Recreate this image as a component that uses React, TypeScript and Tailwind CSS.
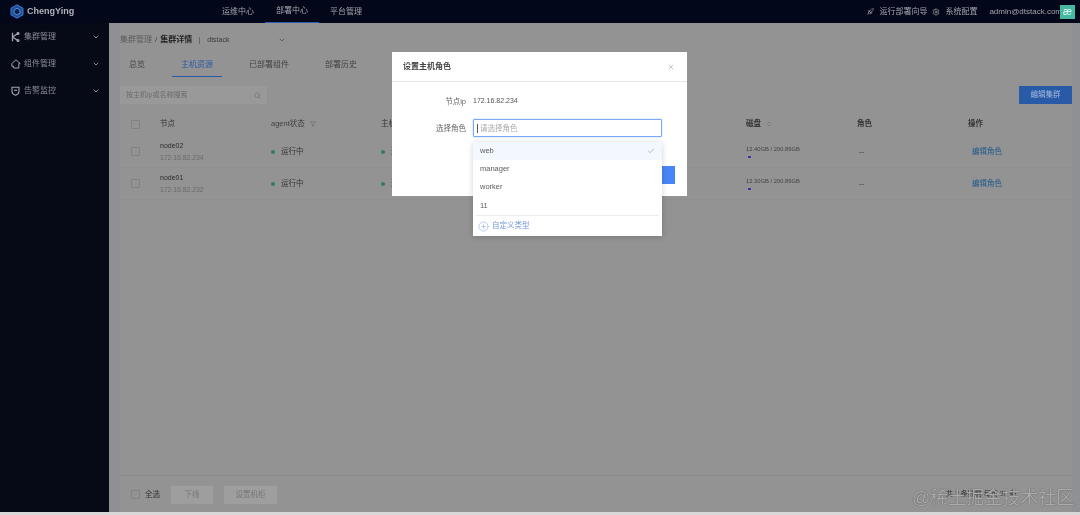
import { Check, ChevronDown, ChevronsUpDown, CirclePlus, Filter, Rocket, Search, Settings, X } from "lucide-react";

function Logo() {
  return (
    <svg width="14" height="15" viewBox="0 0 14 15" fill="none">
      <path d="M7 .8 13 4.2v6.6L7 14.2 1 10.8V4.2Z" fill="#1d4f9c" stroke="#3f7fd0" strokeWidth="1" />
      <path d="M7 4.2 10 6v3.2l-3 1.7-3-1.7V6Z" fill="#0b2350" stroke="#6aa5e6" strokeWidth=".8" />
    </svg>
  );
}

function ClusterIcon() {
  return (
    <svg width="9" height="10" viewBox="0 0 9 10" fill="none" stroke="#a4a7ae" strokeWidth="1.3">
      <path d="M1.5 .8v8.4M1.5 5 6.5 1.8M1.5 5l5 3.2" />
      <circle cx="7" cy="1.5" r=".9" />
      <circle cx="7" cy="8.5" r=".9" />
    </svg>
  );
}

function ComponentIcon() {
  return (
    <svg width="10" height="10" viewBox="0 0 10 10" fill="none" stroke="#a4a7ae" strokeWidth="1">
      <path d="M5 .8 9.2 4.6 7.8 4.6V9H2.6V7.2H.8V4.6Z" />
    </svg>
  );
}

function ShieldIcon() {
  return (
    <svg width="9" height="10" viewBox="0 0 9 10" fill="none" stroke="#a4a7ae" strokeWidth="1.1">
      <path d="M1 1.2h7v4.2Q8 8 4.5 9.2 1 8 1 5.4Z" />
      <path d="M3 4.2h3" />
    </svg>
  );
}

function NavRow({ icon, label }: { icon: React.ReactNode; label: string }) {
  return (
    <div className="flex h-[27px] items-center pl-[11px] pr-[9px] text-[8px] text-[#8b8e96]">
      <span className="flex w-[13px] items-center">{icon}</span>
      <span className="flex-1">{label}</span>
      <ChevronDown size={8} strokeWidth={3} className="text-[#8b8e96]" />
    </div>
  );
}

const cols = "grid grid-cols-[40px_111px_110px_365px_111px_111px_1fr] items-center";

function Box() {
  return <span className="block h-[9px] w-[9px] rounded-[1px] border border-[#828282]" />;
}

function Row({ name, ip, disk }: { name: string; ip: string; disk: string }) {
  return (
    <div className={`${cols} h-[32px] border-b border-[#909090] text-[7.5px]`}>
      <span className="pl-[11px]"><Box /></span>
      <div className="flex flex-col gap-[2px] leading-[10px]">
        <span className="text-[7px] text-[#2c2c2c]">{name}</span>
        <span className="text-[6.8px] text-[#6a6a6a]">{ip}</span>
      </div>
      <div className="flex items-center gap-[6px] text-[#333]">
        <span className="h-[4px] w-[4px] rounded-full bg-[#2a8060]" />
        运行中
      </div>
      <div className="flex items-center gap-[6px] text-[#333]">
        <span className="h-[4px] w-[4px] rounded-full bg-[#2a8060]" />
        运行中
      </div>
      <div className="flex flex-col gap-[2px] leading-[9px]">
        <span className="text-[5.8px] text-[#444]">{disk}</span>
        <span className="ml-[2px] h-[2px] w-[3px] bg-[#3b35a8]" />
      </div>
      <span className="pl-[2px] text-[#333]">--</span>
      <span className="pl-[4px] text-[#22598f]">编辑角色</span>
    </div>
  );
}

export default function App() {
  return (
    <div className="relative flex h-[515px] w-[1080px] flex-col overflow-hidden bg-[#d8d8d8] font-['Liberation_Sans','Noto_Sans_CJK_SC',sans-serif] blur-[0.5px]">
      <header className="flex h-[23px] shrink-0 items-center bg-[#03071a] text-[8px] text-[#a2a4ab]">
        <div className="flex w-[211px] items-center pl-[10px]">
          <Logo />
          <span className="ml-[3px] text-[9px] font-bold text-[#b0b3ba]">ChengYing</span>
        </div>
        <nav className="flex h-full items-center">
          <span className="w-[54px] text-center">运维中心</span>
          <span className="flex h-full w-[54px] items-center justify-center border-b border-[#2a5cb0]">部署中心</span>
          <span className="w-[54px] text-center">平台管理</span>
        </nav>
        <div className="ml-auto flex items-center pr-[18px]">
          <Rocket size={7} className="mr-[5px]" />
          <span>运行部署向导</span>
          <Settings size={8} className="ml-[5px] mr-[5px]" />
          <span>系统配置</span>
          <span className="ml-[12px]">admin@dtstack.com</span>
        </div>
      </header>

      <div className="mb-[3px] flex min-h-0 flex-1">
        <aside className="w-[109px] shrink-0 bg-[#060916]">
          <NavRow icon={<ClusterIcon />} label="集群管理" />
          <NavRow icon={<ComponentIcon />} label="组件管理" />
          <NavRow icon={<ShieldIcon />} label="告警监控" />
        </aside>

        <main className="flex min-w-0 flex-1 bg-[#8e9094] pl-[11px] pr-[8px]">
          <div className="flex min-w-0 flex-1 flex-col bg-[#939393]">
            <div className="flex h-[34px] shrink-0 items-center text-[8px]">
              <span className="text-[#5c5c5c]">集群管理</span>
              <span className="mx-[3px] text-[#444]">/</span>
              <span className="font-bold text-[#222]">集群详情</span>
              <span className="mx-[7px] h-[7px] w-px bg-[#666]" />
              <span className="text-[7px] text-[#3a3a3a]">dtstack</span>
              <ChevronDown size={8} className="ml-[49px] text-[#444]" />
            </div>

            <div className="flex h-[20px] shrink-0 items-start text-[8px] text-[#444]">
              <span className="w-[52px] pl-[9px] pt-[2px]">总览</span>
              <span className="h-[20px] w-[50px] border-b border-[#2a5aa8] pt-[2px] text-center text-[#2a5aa8]">主机资源</span>
              <span className="ml-[27px] pt-[2px]">已部署组件</span>
              <span className="ml-[36px] pt-[2px]">部署历史</span>
            </div>

            <div className="mt-[9px] flex h-[18px] shrink-0 justify-between">
              <div className="flex w-[147px] items-center justify-between bg-[#999999] px-[6px] text-[7px] text-[#6c6c6c]">
                按主机ip或名称搜索
                <Search size={7} />
              </div>
              <button className="h-[18px] w-[53px] bg-[#285aa8] text-[7.5px] text-[#a3b8dc]">编辑集群</button>
            </div>

            <div className={`${cols} mt-[8px] h-[24px] shrink-0 text-[7.5px] text-[#333]`}>
              <span className="pl-[11px]"><Box /></span>
              <span>节点</span>
              <span className="flex items-center gap-[5px] text-[#3f3f3f]">agent状态 <Filter size={6} className="text-[#666]" /></span>
              <span>主机状态</span>
              <span className="flex items-center gap-[5px] font-bold">磁盘 <ChevronsUpDown size={6} className="text-[#666]" /></span>
              <span className="font-bold">角色</span>
              <span className="font-bold">操作</span>
            </div>
            <Row name="node02" ip="172.16.82.234" disk="12.40GB / 200.89GB" />
            <Row name="node01" ip="172.16.82.232" disk="12.30GB / 200.89GB" />

            <div className="mt-auto flex h-[37px] shrink-0 items-center border-t border-[#888888] pl-[11px] pt-[1px] text-[7.5px] text-[#333]">
              <Box />
              <span className="ml-[5px]">全选</span>
              <button className="ml-[11px] h-[18px] w-[42px] bg-[#9e9e9e] text-[#777]">下线</button>
              <button className="ml-[11px] h-[18px] w-[53px] bg-[#9e9e9e] text-[#777]">设置机柜</button>
              <span className="ml-[669px] text-[7px] text-[#333]">共 2 条数据 每页 20 条</span>
            </div>
          </div>
        </main>
      </div>

      <div className="absolute left-[1060px] top-[5px] flex h-[14px] w-[15px] items-center justify-center bg-[#47b8a0] text-[10px] leading-none text-[#e8fff8]">æ</div>

      <section className="absolute left-[392px] top-[52px] h-[144px] w-[295px] bg-white">
        <div className="flex h-[30px] items-center justify-between border-b border-[#e5e5e5] pl-[11px] pr-[12px] text-[8px] font-bold text-[#444]">
          设置主机角色
          <X size={8} className="text-[#aaa]" />
        </div>
        <div className="flex items-center pt-[14px] text-[7.5px] text-[#666]">
          <span className="w-[74px] text-right">节点ip</span>
          <span className="ml-[7px] text-[7px] text-[#555]">172.16.82.234</span>
        </div>
        <div className="mt-[12px] flex items-center text-[7.5px] text-[#666]">
          <span className="w-[74px] text-right">选择角色</span>
          <div className="ml-[7px] flex h-[18px] w-[189px] items-center rounded-[1px] border border-[#7aa9f5] pl-[3px] text-[#aaa] shadow-[0_0_2px_rgba(71,135,245,0.4)]">
            <span className="mr-[2px] h-[9px] w-px bg-[#555]" />
            请选择角色
          </div>
        </div>
        <div className="flex justify-end pr-[12px] pt-[29px]">
          <span className="h-[18px] w-[40px] bg-[#4787f5]" />
        </div>

        <div className="absolute left-[81px] top-[90px] w-[189px] bg-white text-[7.5px] text-[#5c5c5c] shadow-[0_1px_6px_rgba(0,0,0,0.18)]">
          <div className="flex h-[18px] items-center justify-between bg-[#f3f8ff] px-[7px]">web <Check size={8} className="text-[#8aa0b8]" /></div>
          <div className="flex h-[18px] items-center pl-[7px]">manager</div>
          <div className="flex h-[18px] items-center pl-[7px]">worker</div>
          <div className="flex h-[19px] items-center pl-[7px]">11</div>
          <div className="mx-[3px] flex h-[21px] items-center gap-[3px] border-t border-[#ececec] pl-[2px] text-[#6f97d8]">
            <CirclePlus size={11} strokeWidth={1} />
            自定义类型
          </div>
        </div>
      </section>

      <div className="absolute left-[912px] top-[486px] text-[18px] leading-[24px] text-[#aaaaaa] [text-shadow:0_0_1px_#444]">@稀土掘金技术社区</div>
    </div>
  );
}
